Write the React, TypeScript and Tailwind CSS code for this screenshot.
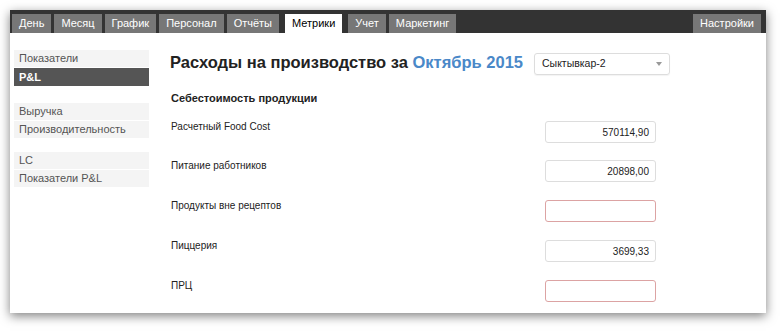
const tabs = ['День', 'Месяц', 'График', 'Персонал', 'Отчёты', 'Метрики', 'Учет', 'Маркетинг'];
const ACTIVE_TAB = 'Метрики';

const sideGroups = [
  { gap: 'mt-0', items: ['Показатели', 'P&L'] },
  { gap: 'mt-[17px]', items: ['Выручка', 'Производительность'] },
  { gap: 'mt-[14px]', items: ['LC', 'Показатели P&L'] },
];
const ACTIVE_SIDE = 'P&L';

interface CostRow {
  label: string;
  value: string;
}

const rows: CostRow[] = [
  { label: 'Расчетный Food Cost', value: '570114,90' },
  { label: 'Питание работников', value: '20898,00' },
  { label: 'Продукты вне рецептов', value: '' },
  { label: 'Пиццерия', value: '3699,33' },
  { label: 'ПРЦ', value: '' },
];

export default function App() {
  return (
    <div className="w-[780px] h-[331px] bg-white pt-[10px] pl-[10px] font-['Liberation_Sans',Arial,sans-serif] text-[#222]">
      <div className="w-[756px] h-[303px] bg-white overflow-hidden shadow-[0_3px_10px_rgba(0,0,0,0.5)]">
        {/* top nav */}
        <div className="h-[23px] bg-[#333] flex items-end justify-between pl-[2px] pr-[5px]">
          <div className="flex items-end gap-[3px]">
            {tabs.map(t => (
              <div
                key={t}
                className={`h-[19px] px-[7px] flex items-center text-[11px] leading-none ${
                  t === ACTIVE_TAB ? 'bg-white text-black mx-[3px]' : 'bg-[#777] text-white'
                }`}
              >
                {t}
              </div>
            ))}
          </div>
          <div className="h-[19px] px-[7px] flex items-center text-[11px] leading-none bg-[#777] text-white">
            Настройки
          </div>
        </div>

        <div className="flex pt-[17px]">
          {/* sidebar */}
          <div className="w-[135px] ml-[4px] flex flex-col">
            {sideGroups.map((g, gi) => (
              <div key={gi} className={`flex flex-col gap-[1px] ${g.gap}`}>
                {g.items.map(item => (
                  <div
                    key={item}
                    className={`pl-[5px] flex items-center text-[11px] leading-none ${
                      item === ACTIVE_SIDE ? 'bg-[#555] text-white font-bold h-[18px]' : 'bg-[#f4f4f4] text-[#555] h-[17px]'
                    }`}
                  >
                    {item}
                  </div>
                ))}
              </div>
            ))}
          </div>

          {/* main */}
          <div className="ml-[21px] flex-1">
            <div className="flex items-center h-[22px] mt-[3px]">
              <h1 className="text-[16.5px] font-bold leading-none w-[364px] whitespace-nowrap mb-[4px]">
                Расходы на производство за <span className="text-[#4a88c8]">Октябрь 2015</span>
              </h1>
              <div className="w-[136px] h-[22px] border border-[#ddd] rounded-[3px] flex items-center justify-between pl-[7px] pr-[7px] text-[10.5px] shadow-[0_1px_1px_rgba(0,0,0,0.05)]">
                <span>Сыктывкар-2</span>
                <svg width="6" height="4" viewBox="0 0 6 4">
                  <path d="M0 0 L6 0 L3 4 Z" fill="#999" />
                </svg>
              </div>
            </div>

            <h2 className="mt-[16px] ml-[1px] text-[11px] font-bold leading-[14px]">Себестоимость продукции</h2>

            <div className="mt-[16px] flex flex-col">
              {rows.map((r, i) => (
                <div key={r.label} className={`flex items-start ${i === 0 ? 'h-[39px]' : 'h-[40px]'}`}>
                  <div className="w-[374px] ml-[1px] text-[10px] leading-[12px]">{r.label}</div>
                  <div
                    className={`w-[111px] h-[22px] rounded-[3px] border flex items-center justify-end pr-[6px] text-[10px] ${
                      r.value ? 'border-[#ddd]' : 'border-[#dca3a3]'
                    }`}
                  >
                    {r.value}
                  </div>
                </div>
              ))}
            </div>
          </div>
        </div>
      </div>
    </div>
  );
}
